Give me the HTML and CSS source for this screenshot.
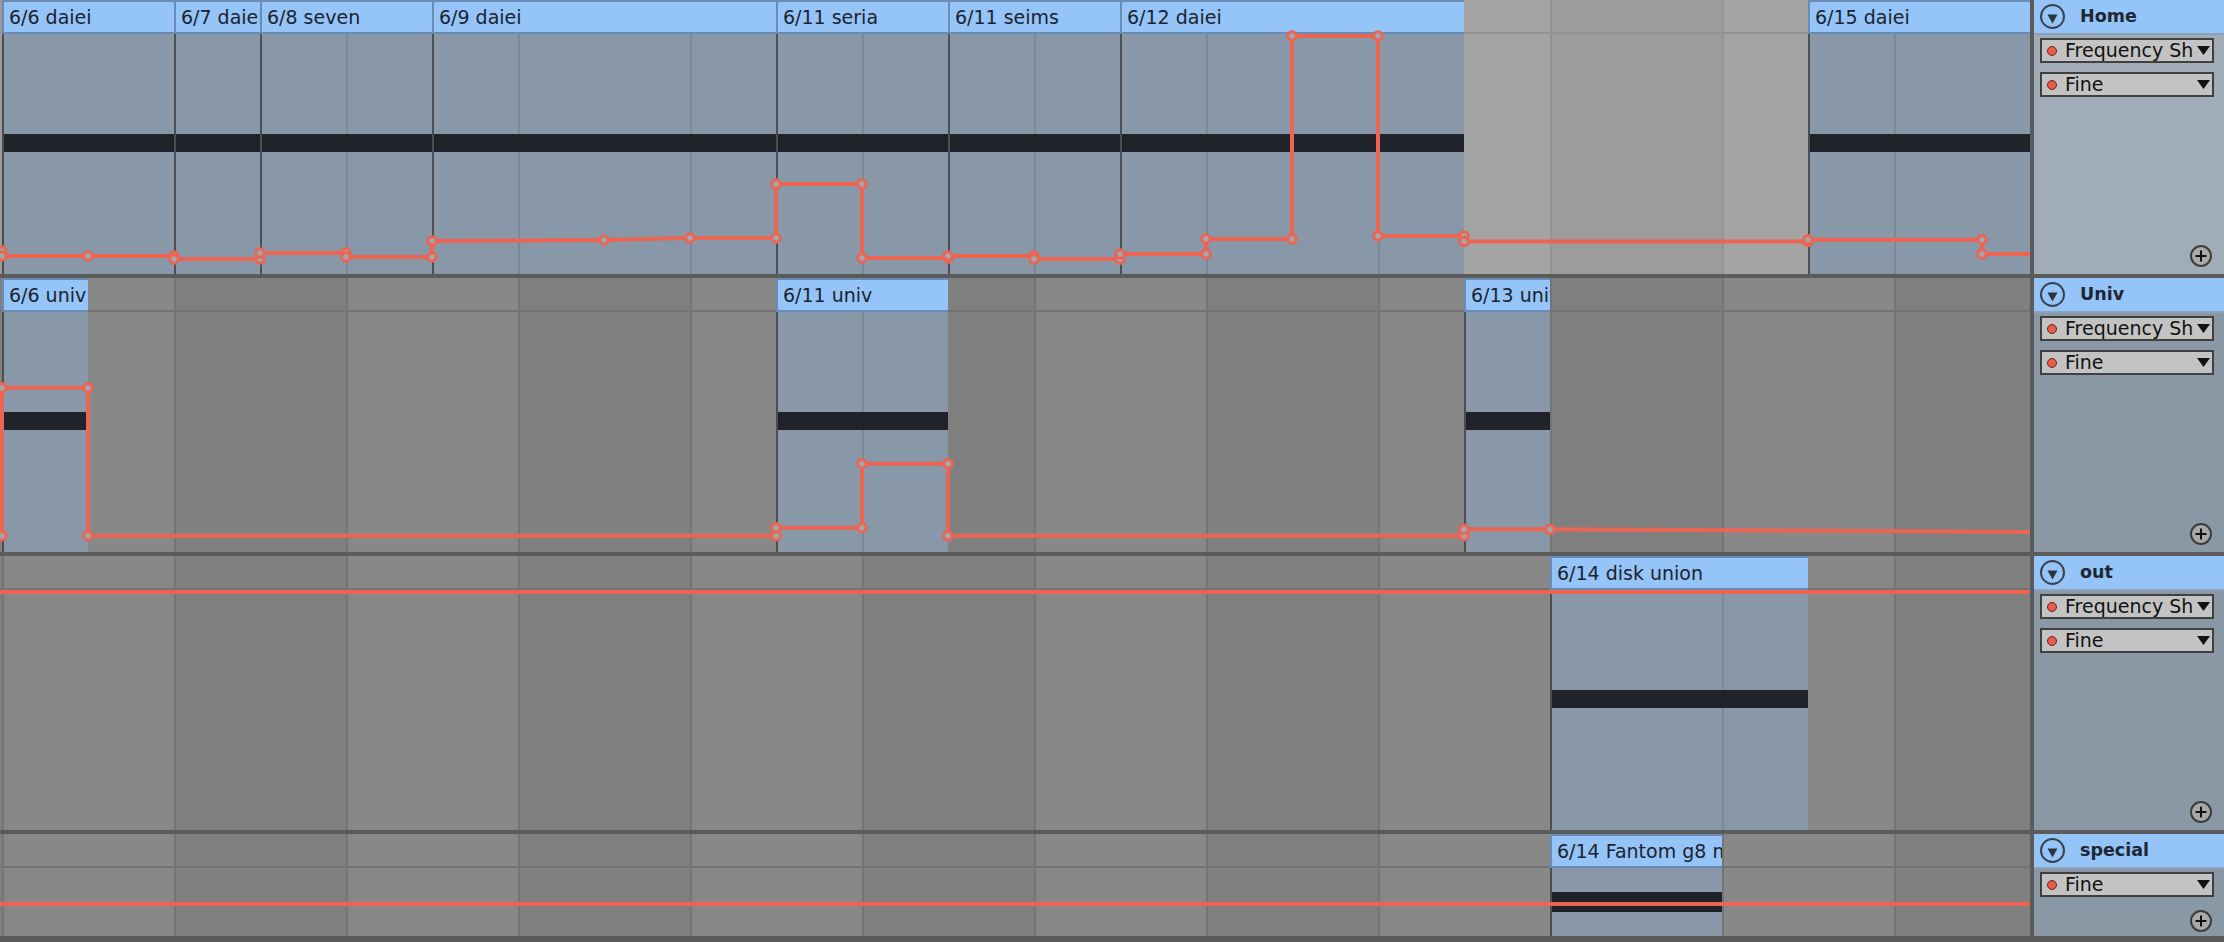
FILE: index.html
```html
<!DOCTYPE html>
<html lang="en">
<head>
<meta charset="utf-8">
<title>Arrangement</title>
<link rel="stylesheet" href="styles.css">
</head>
<body>
<div class="arrangement">

  <div class="track selected">
    <div class="lane">
      <div class="clip" style="grid-column: 1 / span 2"><div class="clip-head">6/6 daiei</div><div class="clip-body"><div class="note"></div></div></div>
      <div class="clip" style="grid-column: 3 / span 1"><div class="clip-head">6/7 daiei</div><div class="clip-body"><div class="note"></div></div></div>
      <div class="clip odd" style="grid-column: 4 / span 2"><div class="clip-head">6/8 seven</div><div class="clip-body"><div class="note"></div></div></div>
      <div class="clip odd" style="grid-column: 6 / span 4"><div class="clip-head">6/9 daiei</div><div class="clip-body"><div class="note"></div></div></div>
      <div class="clip odd" style="grid-column: 10 / span 2"><div class="clip-head">6/11 seria</div><div class="clip-body"><div class="note"></div></div></div>
      <div class="clip odd" style="grid-column: 12 / span 2"><div class="clip-head">6/11 seims</div><div class="clip-body"><div class="note"></div></div></div>
      <div class="clip odd" style="grid-column: 14 / span 4"><div class="clip-head">6/12 daiei</div><div class="clip-body"><div class="note"></div></div></div>
      <div class="clip odd" style="grid-column: 22 / span 3"><div class="clip-head">6/15 daiei</div><div class="clip-body"><div class="note"></div></div></div>
      <svg class="automation" viewBox="0 0 2030 274" width="2030" height="274">
        <path class="env" d="M0 251 L2 251 L2 256 L174 256 L174 259 L260 259 L260 253 L346 253 L346 257 L432 257 L432 241 L604 240 L690 238 L776 238 L776 184 L862 184 L862 258 L948 258 L948 256 L1034 256 L1034 259 L1120 259 L1120 254 L1206 254 L1206 239 L1292 239 L1292 36 L1378 36 L1378 236 L1464 236 L1464 241.5 L1808 241.5 L1808 239.7 L1982 239.7 L1982 254 L2032 254"/>
        <g class="pts">
          <circle cx="2" cy="251" r="4.3"/><circle cx="2" cy="256" r="4.3"/><circle cx="88" cy="256" r="4.3"/>
          <circle cx="174" cy="256" r="4.3"/><circle cx="174" cy="259" r="4.3"/>
          <circle cx="260" cy="259" r="4.3"/><circle cx="260" cy="253" r="4.3"/>
          <circle cx="346" cy="253" r="4.3"/><circle cx="346" cy="257" r="4.3"/>
          <circle cx="432" cy="257" r="4.3"/><circle cx="432" cy="241" r="4.3"/>
          <circle cx="604" cy="240" r="4.3"/><circle cx="690" cy="238" r="4.3"/>
          <circle cx="776" cy="238" r="4.3"/><circle cx="776" cy="184" r="4.3"/>
          <circle cx="862" cy="184" r="4.3"/><circle cx="862" cy="258" r="4.3"/>
          <circle cx="948" cy="258" r="4.3"/><circle cx="948" cy="256" r="4.3"/>
          <circle cx="1034" cy="256" r="4.3"/><circle cx="1034" cy="259" r="4.3"/>
          <circle cx="1120" cy="259" r="4.3"/><circle cx="1120" cy="254" r="4.3"/>
          <circle cx="1206" cy="254" r="4.3"/><circle cx="1206" cy="239" r="4.3"/>
          <circle cx="1292" cy="239" r="4.3"/><circle cx="1292" cy="36" r="4.3"/>
          <circle cx="1378" cy="36" r="4.3"/><circle cx="1378" cy="236" r="4.3"/>
          <circle cx="1464" cy="236" r="4.3"/><circle cx="1464" cy="241.5" r="4.3"/>
          <circle cx="1808" cy="241.5" r="4.3"/><circle cx="1808" cy="239.7" r="4.3"/>
          <circle cx="1982" cy="239.7" r="4.3"/><circle cx="1982" cy="254" r="4.3"/>
        </g>
      </svg>
    </div>
    <div class="panel">
      <div class="panel-head">
        <svg class="fold" viewBox="0 0 25 25" width="25" height="25"><circle cx="12.5" cy="12.5" r="11.5"/><polygon points="7.5,10.5 17.5,10.5 12.5,19.5"/></svg>
        <span class="track-name">Home</span>
      </div>
      <div class="chooser"><span class="dot"></span><span class="chooser-label">Frequency Shift</span><svg class="arrow" viewBox="0 0 13 9" width="13" height="9"><polygon points="0,0 13,0 6.5,9"/></svg></div>
      <div class="chooser next"><span class="dot"></span><span class="chooser-label">Fine</span><svg class="arrow" viewBox="0 0 13 9" width="13" height="9"><polygon points="0,0 13,0 6.5,9"/></svg></div>
      <svg class="add" viewBox="0 0 22 22" width="22" height="22"><circle cx="11" cy="11" r="10"/><path d="M11 5.5 V16.5 M5.5 11 H16.5"/></svg>
    </div>
  </div>

  <div class="track">
    <div class="lane">
      <div class="clip" style="grid-column: 1 / span 1"><div class="clip-head">6/6 univ</div><div class="clip-body"><div class="note"></div></div></div>
      <div class="clip odd" style="grid-column: 10 / span 2"><div class="clip-head">6/11 univ</div><div class="clip-body"><div class="note"></div></div></div>
      <div class="clip odd" style="grid-column: 18 / span 1"><div class="clip-head">6/13 univ</div><div class="clip-body"><div class="note"></div></div></div>
      <svg class="automation" viewBox="0 0 2030 274" width="2030" height="274">
        <path class="env" d="M-2 257.7 L2 257.7 L2 109.7 L88 109.7 L88 257.7 L776 257.7 L776 249.7 L862 249.7 L862 185.7 L948 185.7 L948 257.7 L1464 257.7 L1464 251.3 L1550 251.3 L2032 254"/>
        <g class="pts">
          <circle cx="2" cy="109.7" r="4.3"/><circle cx="2" cy="257.7" r="4.3"/>
          <circle cx="88" cy="109.7" r="4.3"/><circle cx="88" cy="257.7" r="4.3"/>
          <circle cx="776" cy="257.7" r="4.3"/><circle cx="776" cy="249.7" r="4.3"/>
          <circle cx="862" cy="249.7" r="4.3"/><circle cx="862" cy="185.7" r="4.3"/>
          <circle cx="948" cy="185.7" r="4.3"/><circle cx="948" cy="257.7" r="4.3"/>
          <circle cx="1464" cy="257.7" r="4.3"/><circle cx="1464" cy="251.3" r="4.3"/>
          <circle cx="1550" cy="251.3" r="4.3"/>
        </g>
      </svg>
    </div>
    <div class="panel">
      <div class="panel-head">
        <svg class="fold" viewBox="0 0 25 25" width="25" height="25"><circle cx="12.5" cy="12.5" r="11.5"/><polygon points="7.5,10.5 17.5,10.5 12.5,19.5"/></svg>
        <span class="track-name">Univ</span>
      </div>
      <div class="chooser"><span class="dot"></span><span class="chooser-label">Frequency Shift</span><svg class="arrow" viewBox="0 0 13 9" width="13" height="9"><polygon points="0,0 13,0 6.5,9"/></svg></div>
      <div class="chooser next"><span class="dot"></span><span class="chooser-label">Fine</span><svg class="arrow" viewBox="0 0 13 9" width="13" height="9"><polygon points="0,0 13,0 6.5,9"/></svg></div>
      <svg class="add" viewBox="0 0 22 22" width="22" height="22"><circle cx="11" cy="11" r="10"/><path d="M11 5.5 V16.5 M5.5 11 H16.5"/></svg>
    </div>
  </div>

  <div class="track">
    <div class="lane">
      <div class="clip" style="grid-column: 19 / span 3"><div class="clip-head">6/14 disk union</div><div class="clip-body"><div class="note"></div></div></div>
      <svg class="automation" viewBox="0 0 2030 274" width="2030" height="274">
        <path class="env" d="M0 36 L2032 36"/>
      </svg>
    </div>
    <div class="panel">
      <div class="panel-head">
        <svg class="fold" viewBox="0 0 25 25" width="25" height="25"><circle cx="12.5" cy="12.5" r="11.5"/><polygon points="7.5,10.5 17.5,10.5 12.5,19.5"/></svg>
        <span class="track-name">out</span>
      </div>
      <div class="chooser"><span class="dot"></span><span class="chooser-label">Frequency Shift</span><svg class="arrow" viewBox="0 0 13 9" width="13" height="9"><polygon points="0,0 13,0 6.5,9"/></svg></div>
      <div class="chooser next"><span class="dot"></span><span class="chooser-label">Fine</span><svg class="arrow" viewBox="0 0 13 9" width="13" height="9"><polygon points="0,0 13,0 6.5,9"/></svg></div>
      <svg class="add" viewBox="0 0 22 22" width="22" height="22"><circle cx="11" cy="11" r="10"/><path d="M11 5.5 V16.5 M5.5 11 H16.5"/></svg>
    </div>
  </div>

  <div class="track short">
    <div class="lane">
      <div class="clip" style="grid-column: 19 / span 2"><div class="clip-head">6/14 Fantom g8 mk2</div><div class="clip-body"><div class="note"></div></div></div>
      <svg class="automation" viewBox="0 0 2030 102" width="2030" height="102">
        <path class="env" d="M0 70 L2032 70"/>
      </svg>
    </div>
    <div class="panel">
      <div class="panel-head">
        <svg class="fold" viewBox="0 0 25 25" width="25" height="25"><circle cx="12.5" cy="12.5" r="11.5"/><polygon points="7.5,10.5 17.5,10.5 12.5,19.5"/></svg>
        <span class="track-name">special</span>
      </div>
      <div class="chooser"><span class="dot"></span><span class="chooser-label">Fine</span><svg class="arrow" viewBox="0 0 13 9" width="13" height="9"><polygon points="0,0 13,0 6.5,9"/></svg></div>
      <svg class="add" viewBox="0 0 22 22" width="22" height="22"><circle cx="11" cy="11" r="10"/><path d="M11 5.5 V16.5 M5.5 11 H16.5"/></svg>
    </div>
  </div>

</div>
</body>
</html>
```

FILE: styles.css
```css
* { box-sizing: border-box; }

html, body {
  margin: 0;
  padding: 0;
}

body {
  width: 2224px;
  height: 942px;
  overflow: hidden;
  background: #5b5b5b;
  font-family: "DejaVu Sans", "Liberation Sans", sans-serif;
}

.arrangement {
  display: flex;
  flex-direction: column;
  width: 2224px;
}

.track {
  display: flex;
  height: 278px;
  border-bottom: 4px solid #5b5b5b;
  --band-a: #888888;
  --band-b: #808080;
  --grid: #757575;
  --hline: #737373;
}

.track.selected {
  --band-a: #a4a4a4;
  --band-b: #9c9c9c;
  --grid: #939393;
  --hline: #939393;
}

.track.short {
  height: 108px;
  border-bottom-width: 6px;
}

/* timeline lane */
.lane {
  position: relative;
  flex: 0 0 2030px;
  min-width: 0;
  display: grid;
  grid-template-columns: repeat(23, 86px) 1fr;
  padding-left: 2px;
  overflow: hidden;
  background-color: var(--band-a);
  background-image:
    linear-gradient(to bottom, transparent 32px, var(--hline) 32px 34px, transparent 34px),
    linear-gradient(to right, var(--grid) 0 2px, transparent 2px),
    linear-gradient(to right, var(--band-a) 0 172px, var(--band-b) 172px 344px);
  background-size: 100% 100%, 172px 100%, 344px 100%;
  background-position: 0 0, 2px 0, 2px 0;
  background-repeat: no-repeat, repeat-x, repeat-x;
}

.clip {
  display: flex;
  flex-direction: column;
  min-width: 0;
  overflow: hidden;
  --beat-x: -2px;
}

.clip.odd {
  --beat-x: 84px;
}

.clip-head {
  flex: none;
  height: 34px;
  background: #95c4f9;
  border-top: 2px solid #6b8bb5;
  border-bottom: 2px solid #6b8bb5;
  border-left: 2px solid #6b8bb5;
  padding-left: 5px;
  font-size: 19px;
  line-height: 30px;
  color: #1c232c;
  white-space: nowrap;
  overflow: hidden;
}

.clip-body {
  flex: 1;
  border-left: 2px solid #4e4e4e;
  background-color: #8898a8;
  background-image: linear-gradient(to right, #7b8896 0 2px, transparent 2px);
  background-size: 172px 100%;
  background-position: var(--beat-x) 0;
  background-repeat: repeat-x;
}

.note {
  height: 18px;
  margin-top: 100px;
  background: #202329;
}

.track.short .note {
  margin-top: 24px;
  height: 20px;
}

.automation {
  position: absolute;
  left: 0;
  top: 0;
  pointer-events: none;
}

.env {
  fill: none;
  stroke: #ec6452;
  stroke-width: 4;
}

.pts circle {
  fill: #a2a7ad;
  stroke: #ec6452;
  stroke-width: 3;
}

/* device panel */
.panel {
  flex: 0 0 194px;
  width: 194px;
  min-width: 0;
  display: flex;
  flex-direction: column;
  border-left: 4px solid #5b5b5b;
  background: #8a97a4;
  padding-bottom: 7px;
  overflow: hidden;
}

.track.selected .panel {
  background: #a0acb8;
}

.track.short .panel {
  padding-bottom: 4px;
}

.panel-head {
  flex: none;
  height: 35px;
  display: flex;
  align-items: center;
  gap: 15px;
  padding-left: 6px;
  background: #95c4f9;
  border-bottom: 2px solid #8ea3ba;
}

.fold {
  flex: none;
}

.fold circle {
  fill: none;
  stroke: #3a4250;
  stroke-width: 2;
}

.fold polygon {
  fill: #2c3440;
}

.track-name {
  font-size: 17.5px;
  font-weight: bold;
  color: #1e2733;
  line-height: 33px;
}

.chooser {
  flex: none;
  display: flex;
  align-items: center;
  min-width: 0;
  height: 25px;
  margin: 3px 10px 0 6px;
  padding-left: 5px;
  border: 2px solid #404040;
  background: #c3c3c3;
}

.chooser.next {
  margin-top: 9px;
}

.dot {
  flex: none;
  width: 10px;
  height: 10px;
  margin-right: 8px;
  border-radius: 50%;
  background: #ee5a49;
  border: 1px solid #5b2b26;
}

.chooser-label {
  flex: 1;
  min-width: 0;
  margin-right: 3px;
  overflow: hidden;
  white-space: nowrap;
  font-size: 19px;
  line-height: 21px;
  color: #121212;
}

.arrow {
  flex: none;
  margin-right: 2px;
}

.arrow polygon {
  fill: #111111;
}

.add {
  flex: none;
  margin-top: auto;
  align-self: flex-end;
  margin-right: 12px;
}

.add circle {
  fill: #a9a9a9;
  stroke: #3c3c3c;
  stroke-width: 2;
}

.add path {
  stroke: #111111;
  stroke-width: 2;
  fill: none;
}
```
